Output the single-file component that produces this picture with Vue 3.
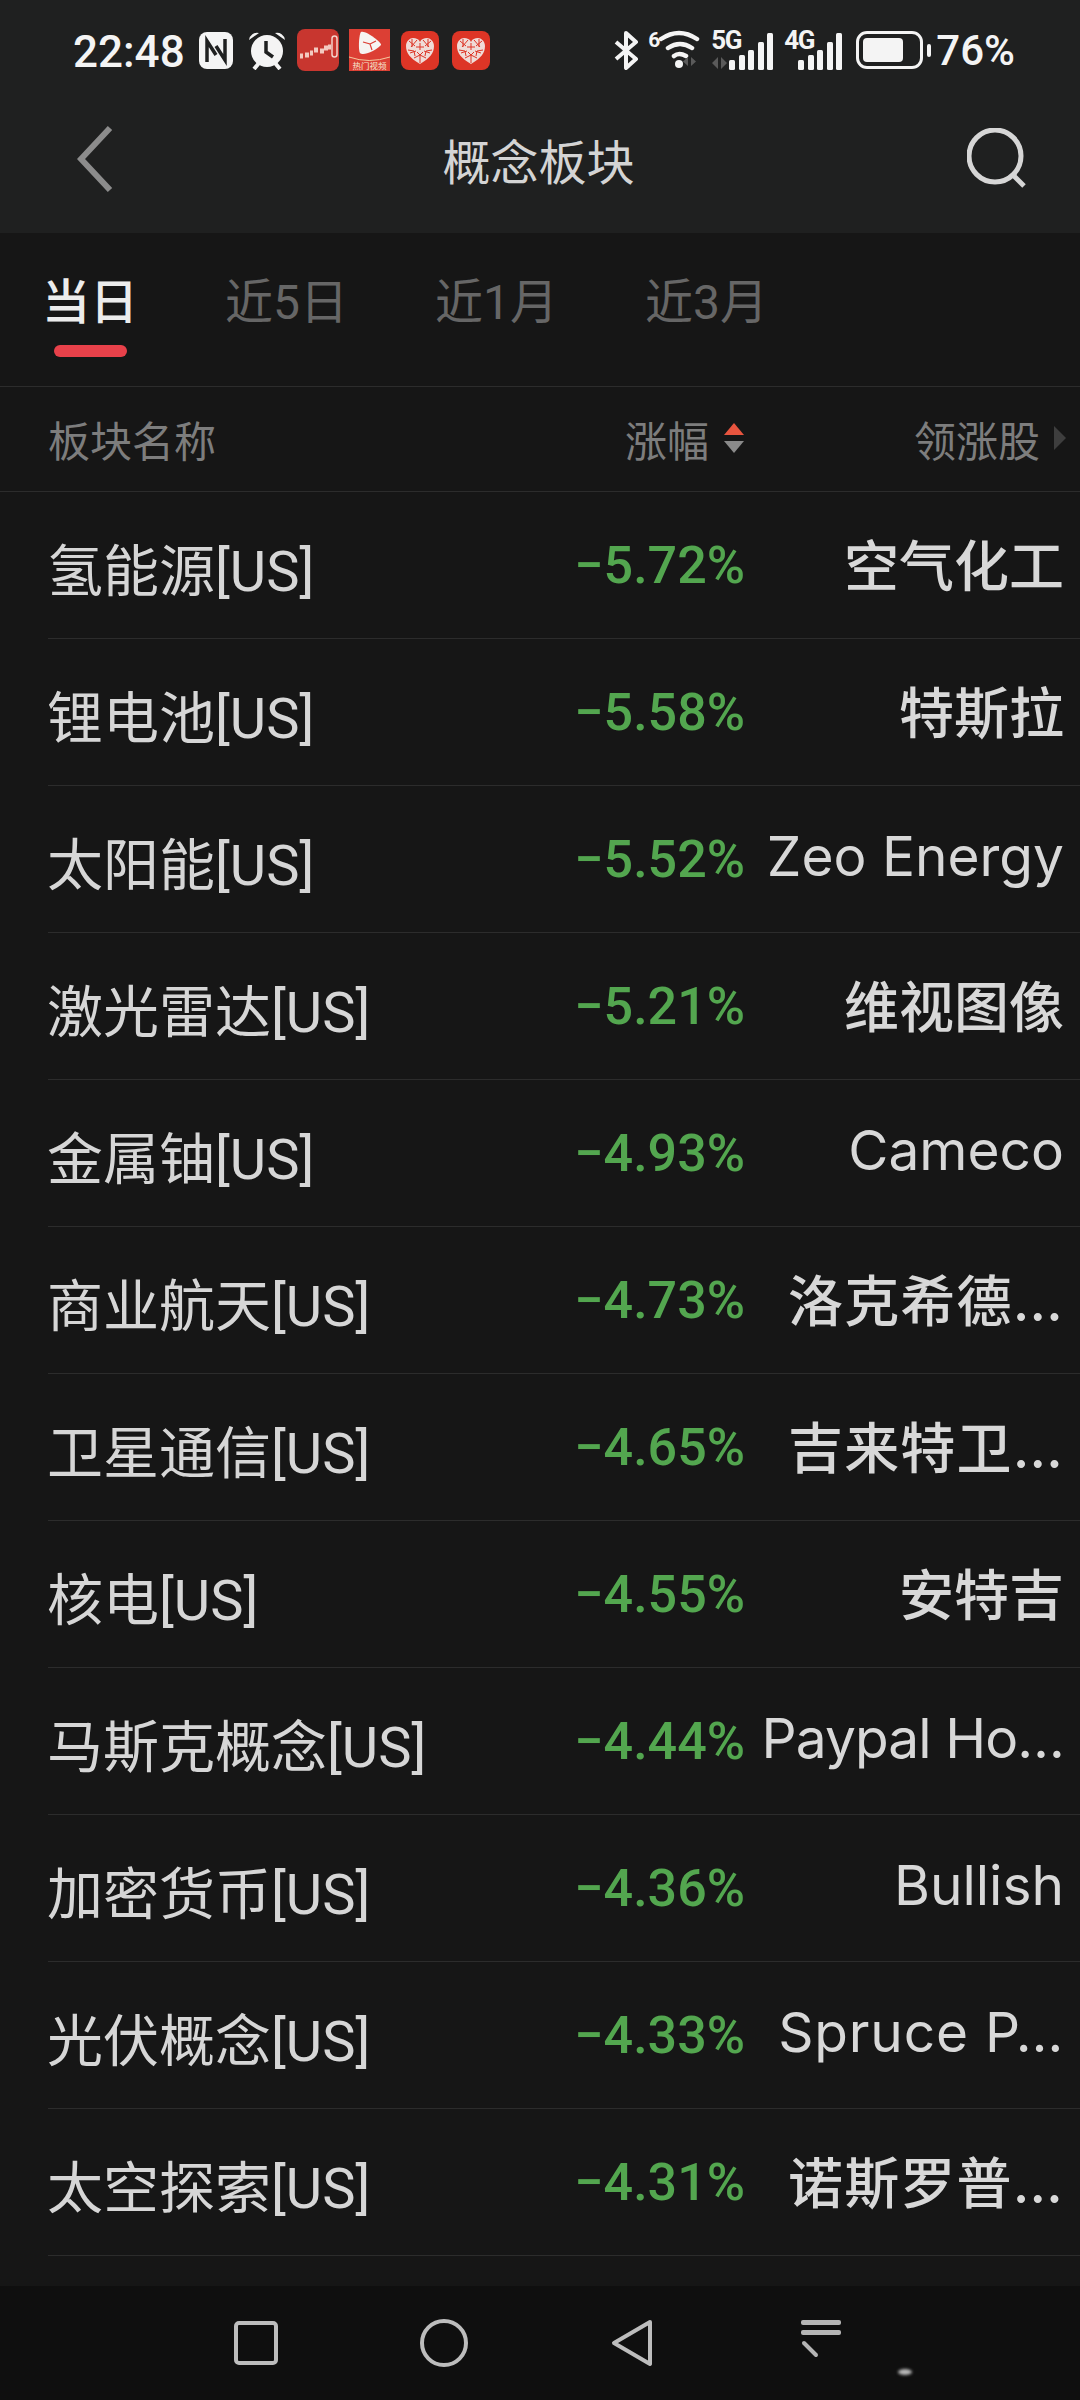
<template>
  <div class="page">
    <!-- top: status bar + title -->
    <div class="top">
      <div class="status">
        <span class="time">22:48</span>
        <svg class="ic nfc" width="34" height="37" viewBox="0 0 34 37">
          <rect x="0" y="0" width="34" height="37" rx="8" fill="#f4f4f4" />
          <path d="M8 30V9l9 14M26 7v21l-9-14" fill="none" stroke="#1f2020" stroke-width="3.500" />
        </svg>
        <svg class="ic alarm" width="38" height="39" viewBox="0 0 38 39">
          <path d="M1 9a8 8 0 0 1 10-7zM37 9a8 8 0 0 0-10-7z" fill="#f4f4f4" />
          <path d="M6 38l5-6M32 38l-5-6" stroke="#f4f4f4" stroke-width="4" />
          <circle cx="19" cy="20" r="16" fill="#f4f4f4" />
          <path d="M18 10v11l7 5" fill="none" stroke="#1f2020" stroke-width="3.500" />
        </svg>
        <svg class="ic tile1" width="42" height="42" viewBox="0 0 42 42">
          <rect width="42" height="42" rx="8" fill="#c8362f" />
          <path d="M3 27h3M8 26h4M13 24h3M17 21h4M23 22h4M27 19h4M31 18h3" stroke="#f3c9c0" stroke-width="5" />
          <rect x="35" y="7" width="5" height="21" rx="2.500" fill="none" stroke="#f3d2ca" stroke-width="1.500" />
        </svg>
        <svg class="ic tile2" width="41" height="42" viewBox="0 0 41 42">
          <rect width="41" height="42" fill="#dc3f34" />
          <path d="M12 3c-2 2-3 18-1 21 3 3 14-1 21-8 1-2-15-15-20-13z" fill="#f6f4f2" />
          <path d="M14 13l7 2 2 6M21 15l6-3" fill="none" stroke="#dc3f34" stroke-width="1.200" />
          <path d="M0 28q20 7 41 0" fill="none" stroke="#f4c9a0" stroke-width="1" />
          <text x="20.500" y="40" text-anchor="middle" class="tile-text">热门视频</text>
        </svg>
        <svg v-for="n in 2" :key="n" class="ic" :class="'heart' + n" width="38" height="39" viewBox="0 0 38 39">
          <rect width="38" height="39" rx="8" fill="#dd3526" />
          <path d="M19 33C9 27 5 22 5 15c0-5 4-8 7-8 3 0 6 1 7 4 1-3 4-4 7-4 3 0 7 3 7 8 0 7-4 12-14 18z" fill="#f0dcd8" />
          <path d="M8 10l6 5M11 8v8M16 9l-6 7M22 9l6 7M27 8v8M30 10l-6 5M19 12v7M15 16l8 0M7 19l6 1 1 5M31 19l-6 1-1 5M9 22l6-2M29 22l-6-2M16 21l3 3 3-3M13 27l6-3 6 3M19 24v8" stroke="#dd3526" stroke-width="1" fill="none" />
        </svg>
        <span class="grow"></span>
        <svg class="ic" width="25" height="39" viewBox="0 0 25 39">
          <path d="M2 11l20 17-10 9V2l10 9L2 28" fill="none" stroke="#f4f4f4" stroke-width="4" stroke-linejoin="round" />
        </svg>
        <div class="wifi">
          <span class="six">6</span>
          <svg width="42" height="38" viewBox="0 0 42 38">
            <path d="M2 9q18-12 36 0M9 18q12-8 24 0M15 26q5-4 12 0" fill="none" stroke="#f4f4f4" stroke-width="4.500" stroke-linecap="round" />
            <circle cx="20" cy="34" r="4" fill="#f4f4f4" />
            <path d="M29 36v-9l-5 4.500zM32 36v-9l5 4.500z" fill="#5a5a5a" />
          </svg>
        </div>
        <div class="signal s5">
          <span class="net">5G</span>
          <svg class="arrows" width="18" height="12" viewBox="0 0 18 12">
            <path d="M7 12V0L1 6zM10 12V0l6 6z" fill="#5a5a5a" />
          </svg>
          <div class="bars"><i v-for="b in bars" :key="b" :style="{ height: b + 'px' }"></i></div>
        </div>
        <div class="signal s4">
          <span class="net">4G</span>
          <div class="bars"><i v-for="b in bars" :key="b" :style="{ height: b + 'px' }"></i></div>
        </div>
        <div class="battery"><div class="level"></div></div>
        <span class="nub"></span>
        <span class="pct-status">76%</span>
      </div>
      <div class="nav">
        <svg width="36" height="68" viewBox="0 0 36 68">
          <path d="M33 3L4 34l29 31" fill="none" stroke="#8c8c8c" stroke-width="6" />
        </svg>
        <span class="title">概念板块</span>
        <svg width="62" height="62" viewBox="0 0 62 62">
          <circle cx="28" cy="28" r="26" fill="none" stroke="#d6d6d6" stroke-width="5" />
          <path d="M46 47l11 11" stroke="#d6d6d6" stroke-width="5" />
        </svg>
      </div>
    </div>

    <div class="tabs">
      <div v-for="(t, i) in tabs" :key="t" class="tab" :class="{ active: i === 0 }">{{ t }}</div>
    </div>

    <div class="thead">
      <span class="th-name">板块名称</span>
      <span class="th-pct">
        涨幅
        <span class="sort"><i class="up"></i><i class="down"></i></span>
      </span>
      <span class="th-lead">领涨股<i class="more"></i></span>
    </div>

    <div class="list">
      <div v-for="r in rows" :key="r.name" class="row">
        <span class="name">{{ r.name }}</span>
        <span class="pct">{{ r.pct }}</span>
        <span class="lead" :class="{ cn: r.cn }" :style="{ letterSpacing: (r.ls || 0) + 'px' }">{{ r.lead }}</span>
      </div>
    </div>

    <div class="bottom">
      <svg class="b-square" width="44" height="44" viewBox="0 0 44 44">
        <rect x="2" y="2" width="40" height="40" rx="3" fill="none" stroke="#bdbdbd" stroke-width="4" />
      </svg>
      <svg class="b-circle" width="48" height="48" viewBox="0 0 48 48">
        <circle cx="24" cy="24" r="22" fill="none" stroke="#bdbdbd" stroke-width="4" />
      </svg>
      <svg class="b-back" width="42" height="48" viewBox="0 0 42 48">
        <path d="M39 3L3 24l36 21z" fill="none" stroke="#bdbdbd" stroke-width="4" stroke-linejoin="round" />
      </svg>
      <div class="b-menu">
        <i></i><i></i>
        <svg width="18" height="18" viewBox="0 0 18 18"><path d="M3 3l12 12" stroke="#b5b5b5" stroke-width="4" stroke-linecap="round" /></svg>
      </div>
      <span class="smudge"></span>
    </div>
  </div>
</template>

<script setup>
const bars = [10, 15, 20, 28, 37]
const tabs = ['当日', '近5日', '近1月', '近3月']

// cn = chinese leader name (drawn a bit heavier), ls = letter spacing to fit the cut off names
const rows = [
  { name: '氢能源[US]', pct: '−5.72%', lead: '空气化工', cn: true },
  { name: '锂电池[US]', pct: '−5.58%', lead: '特斯拉', cn: true },
  { name: '太阳能[US]', pct: '−5.52%', lead: 'Zeo Energy' },
  { name: '激光雷达[US]', pct: '−5.21%', lead: '维视图像', cn: true },
  { name: '金属铀[US]', pct: '−4.93%', lead: 'Cameco' },
  { name: '商业航天[US]', pct: '−4.73%', lead: '洛克希德…', cn: true, ls: 1.2 },
  { name: '卫星通信[US]', pct: '−4.65%', lead: '吉来特卫…', cn: true, ls: 1.2 },
  { name: '核电[US]', pct: '−4.55%', lead: '安特吉', cn: true },
  { name: '马斯克概念[US]', pct: '−4.44%', lead: 'Paypal Ho…', ls: -0.9 },
  { name: '加密货币[US]', pct: '−4.36%', lead: 'Bullish' },
  { name: '光伏概念[US]', pct: '−4.33%', lead: 'Spruce P…', ls: 0.8 },
  { name: '太空探索[US]', pct: '−4.31%', lead: '诺斯罗普…', cn: true, ls: 1.2 }
]
</script>

<style>
body {
  background: #161616;
}
</style>

<style scoped>
.page {
  width: 1080px;
  height: 2400px;
  overflow: hidden;
  display: flex;
  flex-direction: column;
  background: #161616;
  font-family: Roboto, "Noto Sans CJK SC", sans-serif;
}
.top {
  height: 233px;
  background: #1f2020;
}
.status {
  height: 100px;
  padding: 0 65px 0 73px;
  display: flex;
  align-items: center;
  color: #f4f4f4;
  box-sizing: border-box;
}
.time {
  font-size: 44px;
  font-weight: 500;
  width: 126px;
  position: relative;
  top: 2px;
}
.ic {
  flex: none;
}
.alarm { margin-left: 15px; }
.tile1 { margin-left: 11px; }
.tile2 { margin-left: 10px; }
.heart1 { margin-left: 11px; }
.heart2 { margin-left: 13px; }
.tile-text {
  font-size: 8.500px;
  fill: #f6e4d0;
}
.grow {
  flex: 1;
}
.wifi {
  display: flex;
  margin-left: 9px;
  height: 40px;
}
.six {
  font-size: 21px;
  font-weight: 700;
  line-height: 20px;
  width: 11px;
}
.signal {
  position: relative;
  height: 40px;
  display: flex;
  justify-content: flex-end;
  align-items: flex-end;
}
.s5 {
  width: 62px;
  margin-left: 10px;
}
.s4 {
  width: 58px;
  margin-left: 11px;
}
.net {
  position: absolute;
  left: 0;
  top: -3px;
  font-size: 26px;
  font-weight: 700;
  line-height: 26px;
  letter-spacing: -1.500px;
}
.arrows {
  position: absolute;
  left: 0;
  bottom: 1px;
}
.bars {
  display: flex;
  align-items: flex-end;
  gap: 3.500px;
}
.bars i {
  display: block;
  width: 6px;
  background: #f4f4f4;
  border-radius: 1.500px;
}
.battery {
  width: 67px;
  height: 38px;
  margin-left: 14px;
  border: 3px solid #f4f4f4;
  border-radius: 11px;
  padding: 4px;
  box-sizing: border-box;
}
.level {
  width: 40px;
  height: 100%;
  background: #f4f4f4;
  border-radius: 4px;
}
.nub {
  width: 4px;
  height: 13px;
  margin-left: 4px;
  background: #f4f4f4;
  border-radius: 2px;
}
.pct-status {
  font-size: 42px;
  font-weight: 500;
  margin-left: 5px;
}
.nav {
  height: 133px;
  padding: 0 51px 16px 77px;
  display: flex;
  align-items: center;
  justify-content: space-between;
  box-sizing: border-box;
}
.title {
  font-size: 48px;
  color: #d4d4d4;
  margin-left: -3px;
}
.tabs {
  height: 154px;
  padding-left: 42px;
  display: flex;
  gap: 87px;
  align-items: center;
  border-bottom: 1px solid #2c2c2c;
  box-sizing: border-box;
}
.tab {
  position: relative;
  font-size: 48px;
  color: #666;
  line-height: 60px;
  margin-bottom: 14px;
}
.tab.active {
  color: #ececec;
  font-weight: 500;
}
.tab.active::after {
  content: "";
  position: absolute;
  left: 12px;
  right: 11px;
  bottom: -24px;
  height: 12px;
  border-radius: 6px;
  background: #e8414a;
}
.thead {
  height: 105px;
  padding: 0 13px 2px 48px;
  display: flex;
  align-items: center;
  border-bottom: 1px solid #2c2c2c;
  box-sizing: border-box;
  font-size: 42px;
  color: #7d7d7d;
}
.th-name {
  width: 577px;
}
.th-pct {
  display: flex;
  align-items: center;
  gap: 15px;
  width: 289px;
}
.sort {
  display: flex;
  flex-direction: column;
  gap: 6px;
}
.sort i {
  display: block;
  width: 0;
  height: 0;
  border-left: 10px solid transparent;
  border-right: 10px solid transparent;
}
.up {
  border-bottom: 12px solid #e8553f;
}
.down {
  border-top: 12px solid #8a8a8a;
}
.th-lead {
  display: flex;
  align-items: center;
  gap: 14px;
}
.more {
  width: 0;
  height: 0;
  border-top: 12px solid transparent;
  border-bottom: 12px solid transparent;
  border-left: 12px solid #3e3e3e;
}
.list {
  flex: 1;
  margin-left: 48px;
}
.row {
  height: 147px;
  display: grid;
  grid-template-columns: 1fr auto 319px;
  align-items: center;
  padding: 0 16px 0 0;
  border-bottom: 1px solid #2c2c2c;
  box-sizing: border-box;
}
.name {
  font-size: 56px;
  color: #d6d6d6;
  margin-top: 2px;
  margin-left: -1px;
}
.pct {
  font-size: 52px;
  font-weight: 500;
  color: #53a64f;
}
.lead {
  font-family: Inter, "Noto Sans CJK SC", sans-serif;
  font-size: 55px;
  color: #d8d8d8;
  text-align: right;
  white-space: nowrap;
  margin-top: -7px;
}
.lead.cn {
  font-weight: 500;
}
.bottom {
  position: relative;
  height: 114px;
  background: #0f0f0f;
  flex: none;
}
/* nav buttons */
.bottom > * {
  position: absolute;
}
.b-square { left: 234px; top: 35px; }
.b-circle { left: 420px; top: 33px; }
.b-back { left: 611px; top: 33px; }
.b-menu {
  left: 801px;
  top: 34px;
}
.b-menu i {
  display: block;
  width: 40px;
  height: 5px;
  margin: 0 0 5px;
  background: #b5b5b5;
  border-radius: 2px;
}
.smudge {
  left: 898px;
  top: 83px;
  width: 14px;
  height: 6px;
  border-radius: 50%;
  background: #bbb;
  filter: blur(1.500px);
}
</style>
